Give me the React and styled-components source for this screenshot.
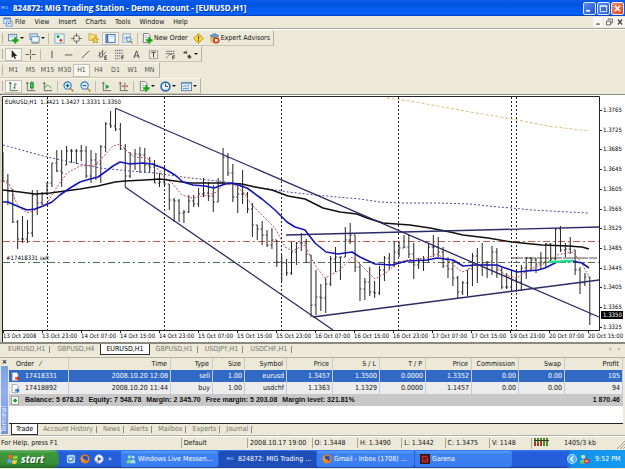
import React from 'react';

import styled, { createGlobalStyle } from 'styled-components'

const GlobalStyle = createGlobalStyle`
  * { box-sizing: border-box; }

  body {
    margin: 0;
    background: #ece9d8;
    font-family: "DejaVu Sans Condensed", "Liberation Sans", sans-serif;
    font-size: 7px;
    line-height: 10px;
    color: #111;
  }

  button {
    margin: 0;
    padding: 0;
    border: 0;
    background: none;
    color: inherit;
    font: inherit;
    white-space: nowrap;
  }
`

const Station = styled.div`
  display: flex;
  flex-direction: column;
  min-height: 100vh;
  overflow: hidden;
`

/* ---------- title bar and menu ---------- */

const TitleBar = styled.header`
  display: flex;
  align-items: center;
  height: 16px;
  padding: 0 1px;
  background: linear-gradient(#0a5be8 0, #0353e2 30%, #0560f8 70%, #0663ff 88%, #0239ae 100%);
  color: #fff;
`

const Logo = styled.span`
  width: 12px;
  font-size: 4px;
  color: #b9d2ff;
`

const Title = styled.h1`
  flex: 1;
  margin: 0;
  font-family: "Open Sans", "Noto Sans", sans-serif;
  font-size: 8px;
  font-weight: bold;
  white-space: nowrap;
  text-shadow: 1px 1px 0 #0338a0;
`

const WindowButtons = styled.div`
  display: flex;
  gap: 1px;
`

const WindowButton = styled.button`
  display: flex;
  width: 13px;
  height: 13px;
  border: 1px solid #e4ecfb;
  border-radius: 2px;
  background: ${props => props.$close ? 'linear-gradient(135deg, #f0906c, #d8431c)' : 'linear-gradient(135deg, #5a8bf4, #1f55d8)'};
`

const MenuBar = styled.nav`
  display: flex;
  align-items: center;
  height: 13px;
  padding: 0 0 0 3px;
  border-bottom: 1px solid #a9a698;
`

const MenuItem = styled.button`
  margin-right: 9px;
`

const MdiButtons = styled.div`
  display: flex;
  gap: 1px;
  margin-left: auto;
`

const MdiButton = styled.button`
  display: flex;
  width: 10px;
  height: 10px;
  background: #f8f7f1;
`

/* ---------- tool bars ---------- */

const ToolArea = styled.section`
  display: flex;
  flex-direction: column;
  align-items: flex-start;
  border-top: 1px solid #fff;
`

const Toolbar = styled.div`
  display: flex;
  align-items: center;
  height: 16px;
  padding: 0 1px 0 5px;
  border-right: 1px solid #b5b2a3;
  border-bottom: 1px solid #c9c6b6;
  border-top: 1px solid #f8f7f0;
  background: linear-gradient(#b5b2a3, #b5b2a3) 2px 2px / 1px 10px no-repeat;
`

const Tool = styled.button`
  display: flex;
  align-items: center;
  justify-content: center;
  gap: 1px;
  width: ${props => props.$auto ? 'auto' : props.$menu ? '21px' : '17px'};
  height: 13px;
  padding: ${props => props.$auto ? '0 1px' : '0'};
  border: 1px solid ${props => props.$pressed ? '#c4c1b2' : 'transparent'};
  background: ${props => props.$pressed ? '#f8f7f2' : 'none'};
  color: ${props => props.$quiet ? '#55544c' : '#111'};

  svg { flex: none; }
`

const Separator = styled.span`
  width: 1px;
  height: 11px;
  margin: 0 2px 0 1px;
  background: #c0bdae;
`

const Caret = styled.span`
  border: 2px solid transparent;
  border-top-color: #111;
  border-bottom: 0;
`

/* ---------- chart ---------- */

const ChartSvg = styled.svg`
  display: block;
  width: 100%;
  height: auto;
  font-family: "DejaVu Sans Condensed", "Liberation Sans", sans-serif;
  font-size: 6px;
`

/* ---------- tab strips ---------- */

const TabStrip = styled.div`
  display: flex;
  align-items: stretch;
  height: 12px;
  padding-left: 2px;
  border-top: 1px solid ${props => props.$line};
`

const Tab = styled.button`
  padding: 0 ${props => props.$pad};
  background: ${props => props.$active ? '#fff' : 'none'};
  border: 1px solid ${props => props.$active ? '#333' : 'transparent'};
  border-top: 0;
  color: ${props => props.$active ? '#000' : '#77746a'};
  line-height: 9px;

  ${props => !props.$active && !props.$last && `
    background: linear-gradient(#8f8c80, #8f8c80) right 2px / 1px 7px no-repeat;
  `}
`

const Scrollers = styled.div`
  display: flex;
  gap: 6px;
  margin-left: auto;
  padding-right: 5px;
  color: #55534b;
`

/* ---------- terminal ---------- */

const Terminal = styled.section`
  display: flex;
  margin-top: 2px;
  border-top: 1px solid #b5b2a3;
`

const Side = styled.div`
  display: flex;
  flex-direction: column;
  width: 9px;
  padding-bottom: 1px;
`

const SideClose = styled.button`
  height: 8px;
  line-height: 8px;
  font-weight: bold;
`

const SideTitle = styled.div`
  flex: 1;
  margin: 0 1px 0 1px;
  padding-top: 2px;
  background: linear-gradient(#6f92dc, #8fb0ef 60%, #7ba2e7);
  color: #e8effc;
  line-height: 7px;
  writing-mode: vertical-rl;
  transform: rotate(180deg);
`

const TerminalMain = styled.div`
  flex: 1;
  min-width: 0;
  padding-right: 2px;
`

const Sheet = styled.div`
  min-height: 65px;
  background: #fff;
`

const Orders = styled.table`
  width: 100%;
  table-layout: fixed;
  border-collapse: separate;
  border-spacing: 0;
`

const HeadCell = styled.th`
  height: 12px;
  padding: 0 3px 0 ${props => props.$left ? '7px' : '0'};
  background: #ece9d8;
  border-right: 1px solid #cfccbd;
  font-weight: normal;
  text-align: ${props => props.$left ? 'left' : 'right'};
  white-space: nowrap;
`

const OrderRow = styled.tr`
  background: ${props => props.$selected ? '#316ac5' : '#ececec'};
  color: ${props => props.$selected ? '#fff' : '#111'};
`

const Cell = styled.td`
  height: 12px;
  padding: 0 2px;
  border-right: 1px solid ${props => props.$plain ? 'transparent' : '#c3cbd8'};
  text-align: ${props => props.$left ? 'left' : 'right'};
  white-space: nowrap;
`

const OrderId = styled.span`
  display: flex;
  align-items: center;
  gap: 5px;
`

const BalanceRow = styled.tr`
  background: #c8c8c8;
  font-family: "Liberation Sans", Arial, sans-serif;
  font-weight: bold;
`

/* ---------- status bar ---------- */

const StatusBar = styled.footer`
  display: flex;
  align-items: center;
  height: 15px;
  border-top: 1px solid #b5b2a3;
  box-shadow: inset 0 1px 0 #fff;
`

const Status = styled.span`
  flex: ${props => props.$size} 0 0;
  min-width: 0;
  padding-left: ${props => props.$first ? '1px' : '2px'};
  border-left: ${props => props.$first ? '0' : '1px solid #aaa799'};
  white-space: nowrap;
`

/* ---------- task bar ---------- */

const TaskBar = styled.div`
  display: flex;
  align-items: stretch;
  height: 18px;
  background: linear-gradient(#3a80f0 0, #245edb 12%, #245edb 85%, #1941a5 100%);
  color: #fff;
`

const StartButton = styled.button`
  display: flex;
  align-items: center;
  gap: 2px;
  width: 59px;
  padding-left: 7px;
  border-radius: 0 6px 6px 0;
  background: linear-gradient(#67b567 0, #3c963c 20%, #388e38 75%, #246c24 100%);
  font-family: "Open Sans", "Noto Sans", sans-serif;
  font-size: 10px;
  font-style: italic;
  font-weight: bold;
  text-shadow: 1px 1px 1px #1d4d1d;
`

const QuickLaunch = styled.div`
  display: flex;
  align-items: center;
  gap: 4px;
  width: 62px;
  padding-left: 7px;
`

const Task = styled.button`
  display: flex;
  align-items: center;
  gap: 2px;
  flex: 0 1 97px;
  min-width: 0;
  margin: 1px 1px 1px 0;
  padding: 0 0 0 5px;
  border-radius: 2px;
  background: ${props => props.$active ? '#1e4fb8' : 'linear-gradient(#5a9bfb, #3c81f3 20%, #3a7df0)'};

  svg { flex: none; }
`

const TaskLabel = styled.span`
  overflow: hidden;
`

const Tray = styled.div`
  display: flex;
  align-items: center;
  gap: 2px;
  width: 58px;
  margin-left: auto;
  background: linear-gradient(90deg, #245edb 0, #1290e8 5px, #139bee);
`

const Clock = styled.time`
  margin-left: 4px;
  white-space: nowrap;
`

/* ---------- icons ---------- */

const Icon = ({ children, size = 12 }) => (
    <svg width={size} height={size} viewBox="0 0 12 12" fill="none" aria-hidden="true">{children}</svg>
)

const plus = <path d="M8 4.5v7M4.5 8h7" stroke="#12a512" strokeWidth="2.4" />

const icons = {
    app: <><rect x="1" y="1" width="8" height="7" fill="#eaf3fc" stroke="#6a93c4" /><path d="M1 2h8" stroke="#4f86cf" strokeWidth="2" /><rect x="4" y="5" width="7" height="6" fill="#dcecfb" stroke="#6a93c4" /><path d="M6 9l1-2 1 1 2-2" stroke="#3972b4" /></>,
    newChart: <><rect x=".5" y="1.5" width="9" height="7" fill="#e4eff8" stroke="#5b87b0" /><path d="M2 3.5h6" stroke="#9fc0dd" />{plus}</>,
    profiles: <><rect x="1" y="1" width="8" height="6" fill="#d8e9f7" stroke="#5b87b0" /><rect x="3" y="4" width="8" height="6" fill="#f5fafe" stroke="#5b87b0" /><path d="M3 11.5h8" stroke="#9a977f" /></>,
    market: <><rect x="1" y="1" width="10" height="10" fill="#eef6fc" stroke="#7ba5c7" /><path d="M4.500 2L6.500 4 4.500 6 2.500 4z" fill="#1d9d3c" /><path d="M7.500 6L9.500 8 7.500 10 5.500 8z" fill="#d8452a" /></>,
    target: <><circle cx="6" cy="6" r="3.500" stroke="#6b6a62" /><path d="M6 0v4M6 8v4M0 6h4M8 6h4" stroke="#6b6a62" /></>,
    favorites: <><path d="M1 1h3l1 1h4v6H1z" fill="#f7df84" stroke="#b99a31" strokeWidth=".8" /><path d="M8 4l1 2.500 2.600.2-2 1.700.7 2.600L8 9.600 5.700 11l.7-2.600-2-1.700L7 6.500z" fill="#ffd633" stroke="#a9821a" strokeWidth=".7" /></>,
    navigator: <><rect x="1" y="1.500" width="10" height="9" fill="#eef5fd" stroke="#3569b5" /><path d="M2.500 2v8" stroke="#3569b5" strokeWidth="2" /><path d="M5 3.500h5" stroke="#a8c5e8" /></>,
    data: <><rect x="1" y="1" width="8" height="9" fill="#f3f7fb" stroke="#86a5c0" /><path d="M3 7V4M5 8V3M7 6V4" stroke="#6c94bb" /><circle cx="7.500" cy="7" r="2.500" fill="#d7ecfa" stroke="#4d83b5" /><path d="M9.300 9L11.500 11.300" stroke="#b78a3a" strokeWidth="1.500" /></>,
    order: <><path d="M1.500.5h5l2 2v8h-7z" fill="#fafafa" stroke="#777" /><path d="M3 3h3M3 5h4M3 7h2" stroke="#999" strokeWidth=".7" />{plus}</>,
    warn: <><path d="M6 .7L11.300 6 6 11.300.7 6z" fill="#ffdb3c" stroke="#b58a10" /><path d="M6 3v4M6 8v1.200" stroke="#6d4b00" strokeWidth="1.300" /></>,
    expert: <><path d="M1 3l5-2.500L11 3 6 5.500z" fill="#5b9dd4" stroke="#336f9f" strokeWidth=".6" /><path d="M2 4v5l4 2.500V6z" fill="#f6c842" stroke="#a6852b" strokeWidth=".6" /><circle cx="8" cy="8" r="3.500" fill="#d6321b" /><rect x="6.500" y="6.500" width="3" height="3" fill="#fff" /></>,
    cursor: <path d="M4 1v9l2-2 1.500 3 1.300-.7L7.400 7.500H10z" fill="#222" />,
    cross: <path d="M6 0.500v4.500M6 7v4.500M.5 6h4.500M7 6h4.500" stroke="#55544c" />,
    vline: <path d="M6.500 2v8" stroke="#444" />,
    hline: <path d="M2 6.500h8" stroke="#555" />,
    slash: <path d="M2 10l8-8" stroke="#555" />,
    channel: <><path d="M1 8l6-6M3 10l7-7M3 3v6M6 1v8" stroke="#555" strokeWidth=".9" /><path d="M11 7.500H8.500v4H11M8.500 9.500h2" stroke="#222" strokeWidth=".8" /></>,
    fibo: <><path d="M1 1.500h9M1 4.500h9M1 7.500h7M1 10.500h5" stroke="#555" strokeDasharray="1.500 .7" /><path d="M11 7.500H8.500v4M8.500 9.500h2" stroke="#222" strokeWidth=".8" /></>,
    letter: <path d="M3 10l3-8 3 8M4 7.500h4" stroke="#444" />,
    label: <><rect x="1.500" y="1.500" width="9" height="9" stroke="#777" strokeDasharray="1 .6" /><path d="M3.500 3.500h5M6 3.500V9" stroke="#333" /></>,
    fan: <><path d="M1 2.500h10M1 5h10M1 10l4-4h3" stroke="#555" strokeDasharray="2 .5" strokeWidth=".9" /><path d="M11 7.500H8.500v4M8.500 9.500h2" stroke="#222" strokeWidth=".8" /></>,
    arrows: <><path d="M2.500 5L5 2M3 2.500l2.500 3M1.500 4h4" stroke="#333" /><path d="M8 6l2.500 3L8 11 5.500 8z" fill="#444" /></>,
    bars: <path d="M2.500 1v9.500H11M1 2.500h3M7.500 2.500v6M5.500 7.500h2M7.500 3.500h2" stroke="#3f7350" />,
    candles: <><path d="M2.500 1v9.500H11M1 2.500h3" stroke="#5d6a5d" /><path d="M7.500 0v9.500" stroke="#1c8b34" /><rect x="6" y="2" width="3" height="5.500" fill="#3ccb55" stroke="#1c8b34" /></>,
    line: <><path d="M2.500 1v9.500H11M1 2.500h3" stroke="#5d6a5d" /><path d="M3 8c2-5 4-4 7 0" stroke="#2ba14a" /></>,
    zoomIn: <><path d="M8 8l3.500 3.500" stroke="#c4953a" strokeWidth="1.800" /><circle cx="5" cy="5" r="4" fill="#dceffc" stroke="#3e7cba" strokeWidth="1.200" /><path d="M5 3v4M3 5h4" stroke="#1c5ba8" strokeWidth="1.200" /></>,
    zoomOut: <><path d="M8 8l3.500 3.500" stroke="#c4953a" strokeWidth="1.800" /><circle cx="5" cy="5" r="4" fill="#dceffc" stroke="#3e7cba" strokeWidth="1.200" /><path d="M3 5h4" stroke="#1c5ba8" strokeWidth="1.200" /></>,
    scroll: <><path d="M2.500 1v9.500H11M1 2.500h3" stroke="#5d6a5d" /><path d="M5 3.500l4.500 2.700L5 9z" fill="#2ba14a" /></>,
    shift: <><path d="M2.500 1v9.500H11M1 2.500h3M7.500 1.500v8" stroke="#5d6a5d" /><path d="M4 5.500h2.500M11 5.500H8.500" stroke="#c2452a" strokeWidth="1.300" /></>,
    clock: <><circle cx="6" cy="6" r="4.800" fill="#eaf4fd" stroke="#2a6cb9" strokeWidth="1.800" /><path d="M6 3v3h2.500" stroke="#333" /></>,
    template: <><rect x=".5" y="1.500" width="11" height="9" fill="#e7f1f9" stroke="#5b87b0" /><path d="M1 2.500h10" stroke="#5b87b0" /><path d="M2 6l2-1 2 1 3-2M2 8.500l2-.500 2 .500 3-1" stroke="#4d83b5" /></>,
    sell: <><path d="M1.500.5h6l2 2v9h-8z" fill="#fff" stroke="#8793ab" /><path d="M5.500 7h3V5l3 3.500-3 3.500v-2h-3z" fill="#d8341c" /></>,
    buy: <><path d="M1.500.5h6l2 2v9h-8z" fill="#fff" stroke="#8793ab" /><path d="M5.500 7h3V5l3 3.500-3 3.500v-2h-3z" fill="#2474c9" /></>,
    balance: <><rect x="1" y=".5" width="9" height="11" fill="#fff" stroke="#8a8a8a" /><path d="M5.500 3l3 3-3 3-3-3z" fill="#1e9a37" /></>,
    flag: <><path d="M1.500 2.300C3 1.300 4.300 1.500 5.800 2.200L5 5.800C3.700 5 2.500 5 1 5.700z" fill="#f0602a" /><path d="M6.500 2.400c1.500.7 3 .6 4.500-.2l-.7 3.600c-1.500.8-3 .8-4.500 0z" fill="#8cd23c" /><path d="M.8 6.600c1.500-.8 2.800-.7 4.100.1l-.7 3.600C2.800 9.500 1.500 9.500 0 10.200z" fill="#5c9df5" /><path d="M5.600 6.800c1.500.8 3 .8 4.500 0l-.7 3.500c-1.500.9-3 .8-4.500 0z" fill="#ffd23c" /></>,
    desktop: <><rect x="1" y="1" width="10" height="10" rx="2" fill="#a9d3fa" /><path d="M3 8l1-4h5L8 8z" fill="#fff" stroke="#2f6fc4" /><path d="M4 10l5-5" stroke="#2f6fc4" /></>,
    firefox: <><circle cx="6" cy="6" r="5.500" fill="#ee7d1c" /><circle cx="6.300" cy="5.300" r="3.200" fill="#2a4fa8" /><path d="M1 3c2 1 2 3 4 3.500 1 .5 2 .2 2.500 1C6 9 3.500 8.500 2 6z" fill="#f9b233" /></>,
    player: <><circle cx="6" cy="6" r="5.300" fill="#f3f6fc" stroke="#6f97dd" /><path d="M4.500 3L9 6l-4.500 3z" fill="#2c5fc4" /><path d="M2 7.500A4.500 4.500 0 0 0 6 10.500" stroke="#f2913a" /></>,
    messenger: <><circle cx="4" cy="3.500" r="2" fill="#9be38e" /><path d="M.5 11c0-6 7-6 7 0z" fill="#7fd37a" /><circle cx="8.500" cy="3.500" r="1.800" fill="#bfe4ff" /><path d="M5.500 11c0-6 6-6 6 0z" fill="#a8d8fa" /></>,
    garena: <><rect x=".5" y=".5" width="11" height="11" fill="#5f1212" stroke="#2a1111" /><path d="M9 3H3v6h6V6H6" stroke="#b8322a" strokeWidth="1.500" /></>,
    back: <><circle cx="6" cy="6" r="5.500" fill="#4fb3f5" stroke="#b9e2fb" /><path d="M7.500 3L4.500 6l3 3" stroke="#fff" strokeWidth="1.700" /></>,
    user: <><circle cx="5" cy="3.300" r="2.500" fill="#c5ecb4" /><path d="M1 11.500c0-6.500 8-6.500 8 0z" fill="#79c96a" /><circle cx="9" cy="8.500" r="3" fill="#dd2f22" /><path d="M7.300 8.500h3.400" stroke="#fff" strokeWidth="1.200" /></>,
}

/* ---------- data ---------- */

const menus = ['File', 'View', 'Insert', 'Charts', 'Tools', 'Window', 'Help']
const periods = ['M1', 'M5', 'M15', 'M30', 'H1', 'H4', 'D1', 'W1', 'MN']
const chartTabs = ['EURUSD,H1', 'GBPUSD,H4', 'EURUSD,H1', 'GBPUSD,H1', 'USDJPY,H1', 'USDCHF,H1']
const terminalTabs = ['Trade', 'Account History', 'News', 'Alerts', 'Mailbox', 'Experts', 'Journal']

const drawTools = ['vline', 'hline', 'slash', 'channel', 'fibo', 'letter', 'label', 'fan']

// [heading, column width]
const columns = [
    ['Order', 60], ['Time', 102], ['Type', 42], ['Size', 32], ['Symbol', 42], ['Price', 46],
    ['S / L', 47], ['T / P', 46], ['Price', 46], ['Commission', 47], ['Swap', 46], ['Profit', 58],
]

const orders = [
    ['17418331', '2008.10.20 12:08', 'sell', '1.00', 'eurusd', '1.3457', '1.3500', '0.0000', '1.3352', '0.00', '0.00', '105'],
    ['17418892', '2008.10.20 11:44', 'buy', '1.00', 'usdchf', '1.1363', '1.1329', '0.0000', '1.1457', '0.00', '0.00', '94'],
]

const balance = ['Balance: 5 678.32', 'Equity: 7 548.78', 'Margin: 2 345.70', 'Free margin: 5 203.08', 'Margin level: 321.81%']

const timeLabels = [
    '13 Oct 2008', '13 Oct 23:00', '14 Oct 07:00', '14 Oct 15:00', '14 Oct 23:00', '15 Oct 07:00', '15 Oct 15:00', '15 Oct 23:00',
    '16 Oct 07:00', '16 Oct 15:00', '16 Oct 23:00', '17 Oct 07:00', '17 Oct 15:00', '19 Oct 23:00', '20 Oct 07:00', '20 Oct 15:00',
]

const priceLabels = ['1.3765', '1.3725', '1.3685', '1.3645', '1.3605', '1.3565', '1.3525', '1.3485', '1.3445', '1.3405', '1.3365', '1.3325']

// [high, low, close] of every hour
const bars = [
    [152, 182, 181], [174, 205, 191], [189, 223, 222], [220, 249, 239], [216, 243, 239], [220, 243, 233], [190, 237, 195], [190, 215, 203],
    [192, 205, 194], [182, 195, 183], [163, 187, 163], [150, 172, 171], [150, 187, 173], [146, 165, 151], [149, 163, 151], [149, 164, 151],
    [145, 161, 151], [146, 178, 176], [150, 183, 160], [153, 180, 164], [145, 183, 147], [122, 152, 124], [111, 128, 126], [109, 131, 129],
    [123, 150, 149], [144, 187, 176], [152, 178, 163], [149, 170, 154], [147, 173, 155], [148, 173, 165], [157, 173, 167], [160, 183, 183],
    [173, 187, 182], [167, 185, 184], [184, 210, 200], [198, 222, 201], [199, 222, 213], [210, 223, 212], [195, 213, 201], [195, 207, 204],
    [188, 207, 194], [178, 197, 193], [182, 201, 196], [185, 212, 202], [178, 202, 183], [148, 183, 157], [153, 176, 173], [164, 202, 197],
    [186, 213, 194], [170, 204, 194], [192, 213, 209], [203, 237, 225], [225, 240, 229], [221, 245, 235], [230, 247, 245], [228, 249, 240],
    [240, 267, 262], [255, 281, 263], [259, 276, 273], [242, 275, 252], [242, 265, 243], [233, 251, 243], [239, 263, 254], [255, 317, 305],
    [270, 315, 297], [284, 311, 298], [278, 313, 284], [256, 286, 259], [247, 272, 257], [257, 280, 257], [227, 257, 240], [223, 244, 235],
    [235, 272, 267], [264, 301, 289], [278, 300, 282], [267, 296, 292], [281, 298, 293], [266, 295, 270], [256, 281, 258], [253, 270, 265],
    [241, 267, 252], [242, 257, 248], [235, 248, 247], [234, 258, 254], [243, 279, 265], [258, 269, 262], [256, 271, 260], [243, 262, 247],
    [235, 257, 247], [237, 257, 252], [247, 268, 266], [257, 278, 269], [261, 286, 278], [276, 298, 292], [281, 295, 283], [270, 296, 269],
    [253, 286, 256], [248, 283, 265], [243, 276, 264], [261, 278, 262], [246, 275, 252], [248, 278, 270], [267, 289, 287], [273, 289, 287],
    [271, 291, 280], [271, 292, 282], [265, 291, 268], [257, 279, 258], [257, 270, 260], [258, 273, 264], [252, 269, 262], [243, 268, 244],
    [243, 263, 259], [228, 260, 229], [226, 252, 250], [243, 257, 249], [237, 254, 246], [250, 275, 270], [267, 294, 283], [273, 286, 277],
    [277, 325, 315],
]

const averages = [
    { color: '#dfbf78', width: 1, dash: '3 2', points: '387,98 410,101 443,107 470,112 512,119 548,126 588,131' },
    { color: '#4a4a9c', width: 1, dash: '2 2', points: '3,145 25,151 47,157 75,163 100,168 130,171 155,173 182,177 208,180 235,183 255,187 288,192 315,195 360,199 380,202 400,203 440,203 470,204 498,207 512,208 532,210 568,212 588,213' },
    { color: '#c0505a', width: 1, dash: '2 1.500', points: '3,181 10,185 15,200 20,208 27,213 35,210 47,203 57,187 67,173 80,166 95,165 105,155 113,146 120,144 128,152 135,157 147,158 155,165 165,178 172,183 182,195 192,198 208,195 217,192 223,185 233,184 243,192 252,205 265,218 275,228 285,247 292,251 305,245 310,256 317,268 325,278 340,270 352,257 360,264 375,279 387,272 398,262 413,259 427,258 437,254 450,262 462,272 468,270 473,265 495,265 505,275 517,278 528,270 548,262 557,255 572,252 580,260 589,277' },
    { color: '#111', width: 1.5, points: '3,190 20,192 35,194 50,193 65,191 80,189 98,186 115,182 125,181 145,180 160,179 175,181 190,183 222,183 242,184 255,187 272,190 288,196 305,199 315,204 323,208 340,212 357,214 367,218 383,223 410,225 430,228 450,232 463,235 488,238 512,242 542,245 568,246 582,247 589,249' },
    { color: '#1414b8', width: 1.6, points: '3,202 8,202 17,206 27,210 35,209 43,206 52,202 60,195 70,188 80,182 90,179 98,177 105,172 113,166 120,162 130,164 143,163 152,164 163,168 175,175 183,182 193,185 205,186 214,188 225,184 232,183 247,188 262,199 275,210 281,216 287,222 295,227 305,230 315,243 326,252 338,254 352,252 360,257 375,264 392,265 407,261 427,260 437,258 453,260 463,266 475,265 497,265 505,268 517,272 538,270 545,268 557,262 572,261 582,263 589,268' },
]

const trendLines = ['115,108 599,317', '125,187 333,330', '286,235 599,227', '313,317 599,280']

const barX = index => 3 + index * 4.89

const stemPath = bars.map(([high, low], i) => `M${barX(i)} ${high}V${low}`).join('')

const tickPath = bars.map(([high, low, close], i) => {
    const x = barX(i)
    const last = i ? bars[i - 1][2] : close
    const open = Math.min(Math.max(last, high), low)
    return `M${x - 1.5} ${open}H${x}M${x} ${close}H${x + 1.5}`
}).join('')

/* ---------- parts ---------- */

const ToolButton = ({ icon, menu, pressed, label, text }) => (
    <Tool $menu={menu} $pressed={pressed} $auto={!!text} aria-label={label || icon}>
        <Icon size={11}>{icons[icon]}</Icon>
        {text}
        {menu && <Caret />}
    </Tool>
)

const PriceChart = () => (
    <ChartSvg viewBox="0 94 625 249" role="img" aria-label="EURUSD,H1">
        <rect x="0" y="94" width="625" height="249" fill="#fff" />
        <rect x="0" y="94" width="2" height="249" fill="#d8d5c6" />
        <rect x="0" y="94" width="625" height="1" fill="#8c897c" />
        <path d="M2.500 343V96.500H599.500V330.500H2.500" stroke="#222" fill="none" />
        {[47.5, 164.5, 281.5, 398.5, 511.5, 516.5].map(x => (
            <path key={x} d={`M${x} 97V330`} stroke="#222" strokeDasharray="2 2" fill="none" />
        ))}
        <path d="M3 241.500H599" stroke="#c65a48" strokeDasharray="7 3 2 3" fill="none" />
        <path d="M3 262.500H599" stroke="#4d7352" strokeDasharray="7 3 2 3" fill="none" />
        <path d="M511 258H597" stroke="#555" strokeDasharray="12 1" fill="none" />
        <path d={stemPath} stroke="#222" fill="none" />
        <path d={tickPath} stroke="#333" fill="none" />
        {averages.map(line => (
            <polyline key={line.color} points={line.points} fill="none" stroke={line.color} strokeWidth={line.width} strokeDasharray={line.dash} strokeLinejoin="round" />
        ))}
        <path d="M548 262L573 261" stroke="#25dc8a" strokeWidth="2.500" fill="none" />
        {trendLines.map(points => (
            <polyline key={points} points={points} stroke="#2b2b66" strokeWidth="1.300" fill="none" />
        ))}
        <text x="5" y="104">EURUSD,H1&nbsp; 1.3421 1.3427 1.3331 1.3350</text>
        <text x="6" y="260">#17418331 sell</text>
        {priceLabels.map((label, i) => (
            <g key={label}>
                <path d={`M600 ${110.500 + Math.round(i * 19.7)}h2`} stroke="#222" />
                <text x="603" y={112 + Math.round(i * 19.7)}>{label}</text>
            </g>
        ))}
        <rect x="601" y="311" width="22" height="8" fill="#000" />
        <text x="603" y="317" fill="#fff">1.3350</text>
        {timeLabels.map((label, i) => (
            <g key={label}>
                <path d={`M${3.500 + Math.round(i * 39)} 331v2`} stroke="#222" />
                <text x={3 + Math.round(i * 39)} y="338">{label}</text>
            </g>
        ))}
        <rect x="0" y="342" width="625" height="1" fill="#8c897c" />
    </ChartSvg>
)

const OrderTable = () => (
    <Orders>
        <colgroup>
            {columns.map(([, width], i) => <col key={i} width={width} />)}
        </colgroup>
        <thead>
            <tr>
                {columns.map(([name], i) => (
                    <HeadCell key={i} $left={i === 0}>{name}{i === 0 && <>&nbsp;&nbsp; ⁄</>}</HeadCell>
                ))}
            </tr>
        </thead>
        <tbody>
            {orders.map((order, row) => (
                <OrderRow key={order[0]} $selected={row === 0}>
                    {order.map((value, i) => (
                        <Cell key={i} $left={i === 0}>
                            {i === 0
                                ? <OrderId><Icon size={9}>{icons[order[2]]}</Icon>{value}</OrderId>
                                : value}
                        </Cell>
                    ))}
                </OrderRow>
            ))}
        </tbody>
        <tfoot>
            <BalanceRow>
                <Cell $left $plain colSpan={11}>
                    <OrderId>
                        <Icon size={9}>{icons.balance}</Icon>
                        {balance.map(item => <span key={item}>{item}</span>)}
                    </OrderId>
                </Cell>
                <Cell $plain>1 870.46</Cell>
            </BalanceRow>
        </tfoot>
    </Orders>
)

const App = () => {
    return (
        <>
            <GlobalStyle />
            <Station>
                <TitleBar>
                    <Logo>MIG</Logo>
                    <Title>824872: MIG Trading Station - Demo Account - [EURUSD,H1]</Title>
                    <WindowButtons>
                        <WindowButton aria-label="Minimize"><Icon size={11}><path d="M2.500 8.500h4" stroke="#fff" strokeWidth="2" /></Icon></WindowButton>
                        <WindowButton aria-label="Maximize"><Icon size={11}><path d="M2.500 3h7v6.500h-7zM2 3.500h8" stroke="#fff" /></Icon></WindowButton>
                        <WindowButton $close aria-label="Close"><Icon size={11}><path d="M3 3l6 6M9 3L3 9" stroke="#fff" strokeWidth="1.600" /></Icon></WindowButton>
                    </WindowButtons>
                </TitleBar>

                <MenuBar>
                    <Icon size={10}>{icons.app}</Icon>
                    <span>&nbsp;</span>
                    {menus.map(name => <MenuItem key={name}>{name}</MenuItem>)}
                    <MdiButtons>
                        <MdiButton aria-label="Minimize chart"><Icon size={10}><path d="M4 8.500h4" stroke="#444" strokeWidth="1.500" /></Icon></MdiButton>
                        <MdiButton aria-label="Restore chart"><Icon size={10}><path d="M5 4V2.500h5V7H8M3 5h5v4.500H3z" stroke="#444" /></Icon></MdiButton>
                        <MdiButton aria-label="Close chart"><Icon size={10}><path d="M3.500 3l5 6M8.500 3l-5 6" stroke="#444" strokeWidth="1.500" /></Icon></MdiButton>
                    </MdiButtons>
                </MenuBar>

                <ToolArea>
                    <Toolbar>
                        <ToolButton icon="newChart" menu />
                        <ToolButton icon="profiles" menu />
                        <Separator />
                        <ToolButton icon="market" />
                        <ToolButton icon="target" />
                        <ToolButton icon="favorites" />
                        <ToolButton icon="navigator" pressed />
                        <ToolButton icon="data" />
                        <Separator />
                        <ToolButton icon="order" text="New Order" label="New Order" />
                        <ToolButton icon="warn" />
                        <ToolButton icon="expert" text="Expert Advisors" label="Expert Advisors" />
                    </Toolbar>
                    <Toolbar>
                        <ToolButton icon="cursor" pressed />
                        <ToolButton icon="cross" />
                        <Separator />
                        {drawTools.map(name => <ToolButton key={name} icon={name} />)}
                        <ToolButton icon="arrows" menu />
                    </Toolbar>
                    <Toolbar>
                        {periods.map(name => <Tool key={name} $quiet $pressed={name === 'H1'}>{name}</Tool>)}
                    </Toolbar>
                    <Toolbar>
                        <ToolButton icon="bars" pressed />
                        <ToolButton icon="candles" />
                        <ToolButton icon="line" />
                        <Separator />
                        <ToolButton icon="zoomIn" />
                        <ToolButton icon="zoomOut" />
                        <Separator />
                        <ToolButton icon="scroll" />
                        <ToolButton icon="shift" />
                        <Separator />
                        <ToolButton icon="order" menu label="Indicators" />
                        <ToolButton icon="clock" menu />
                        <ToolButton icon="template" menu />
                    </Toolbar>
                </ToolArea>

                <PriceChart />

                <TabStrip $line="#8c897c">
                    {chartTabs.map((name, i) => (
                        <Tab key={i} $active={i === 2} $pad="5px" $last={i === 1}>{name}</Tab>
                    ))}
                    <Scrollers><span>‹</span><span>›</span></Scrollers>
                </TabStrip>

                <Terminal>
                    <Side>
                        <SideClose aria-label="Close terminal">×</SideClose>
                        <SideTitle>Terminal</SideTitle>
                    </Side>
                    <TerminalMain>
                        <Sheet><OrderTable /></Sheet>
                        <TabStrip $line="#222">
                            {terminalTabs.map((name, i) => (
                                <Tab key={name} $active={i === 0} $pad="4px">{name}</Tab>
                            ))}
                        </TabStrip>
                    </TerminalMain>
                </Terminal>

                <StatusBar>
                    <Status $first $size={187}>For Help, press F1</Status>
                    <Status $size={66}>Default</Status>
                    <Status $size={64}>2008.10.17 19:00</Status>
                    <Status $size={44}>O: 1.3448</Status>
                    <Status $size={43}>H: 1.3490</Status>
                    <Status $size={42}>L: 1.3442</Status>
                    <Status $size={43}>C: 1.3475</Status>
                    <Status $size={41}>V: 1148</Status>
                    <Status $size={30}>
                        <svg width="15" height="8" viewBox="0 0 15 8" aria-hidden="true">
                            <path d="M1 0v8M4 0v8M7 0v8M10 0v8M13 0v8" stroke="#55862a" strokeWidth="2" />
                            <path d="M1 4v4M4 5v3M7 3v5" stroke="#b3342a" strokeWidth="2" />
                            <path d="M0 2.500h15" stroke="#2c3d18" />
                        </svg>
                    </Status>
                    <Status $first $size={54}>1405/3 kb</Status>
                    <svg width="9" height="12" viewBox="0 0 9 12" aria-hidden="true">
                        <path d="M1 12l8-8M4 12l5-5M7 12l2-2" stroke="#a3a092" />
                    </svg>
                </StatusBar>

                <TaskBar>
                    <StartButton><Icon size={12}>{icons.flag}</Icon>start</StartButton>
                    <QuickLaunch>
                        <Icon size={10}>{icons.desktop}</Icon>
                        <Icon size={10}>{icons.firefox}</Icon>
                        <Icon size={10}>{icons.player}</Icon>
                        <span>»</span>
                    </QuickLaunch>
                    <Task><Icon size={10}>{icons.messenger}</Icon><TaskLabel>Windows Live Messen...</TaskLabel></Task>
                    <Task $active><Logo>MIG</Logo><TaskLabel>824872: MIG Trading ...</TaskLabel></Task>
                    <Task><Icon size={10}>{icons.firefox}</Icon><TaskLabel>Gmail - Inbox (1708) ...</TaskLabel></Task>
                    <Task><Icon size={10}>{icons.garena}</Icon><TaskLabel>Garena</TaskLabel></Task>
                    <Tray>
                        <Icon size={10}>{icons.back}</Icon>
                        <Icon size={10}>{icons.user}</Icon>
                        <Clock>9:52 PM</Clock>
                    </Tray>
                </TaskBar>
            </Station>
        </>
    )
}

export default App
